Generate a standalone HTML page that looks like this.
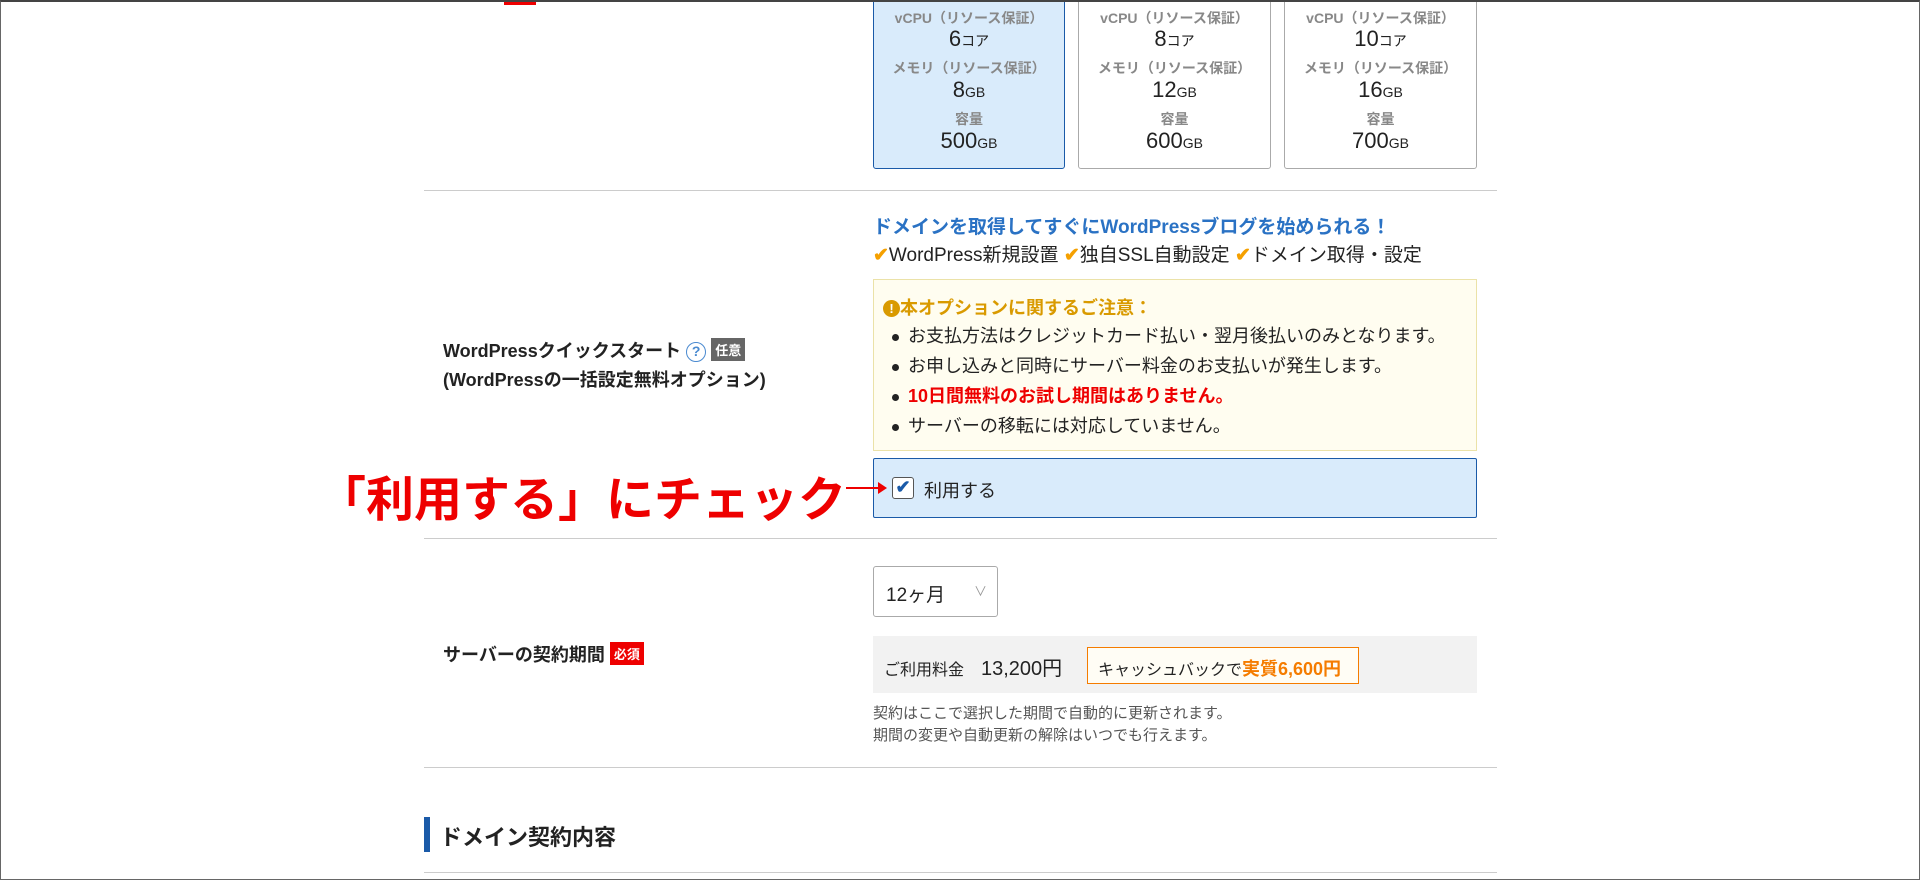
<!DOCTYPE html><html><head><meta charset="utf-8"><style>
*{box-sizing:border-box;margin:0;padding:0}
body{width:1920px;height:880px;overflow:hidden;background:#fff;font-family:"Liberation Sans","Noto Sans CJK JP",sans-serif;color:#222;position:relative}
.a{position:absolute}
.frame{position:absolute;left:0;top:0;width:1920px;height:880px;border:1px solid #666;border-top:2px solid #444}
.card{position:absolute;top:-4px;height:173px;border:1px solid #aaa;border-radius:3px;text-align:center;background:#fff}
.card.sel{background:#d9ebfb;border-color:#1a5aa8}
.card .l{position:absolute;left:0;right:0;font-size:14px;color:#888;font-weight:bold}
.card .v{position:absolute;left:0;right:0;font-size:22px;color:#222}
.card .v small{font-size:14px}
.hr{position:absolute;left:424px;width:1073px;height:1px;background:#ccc}
.bul{position:absolute;left:892px;font-size:18px}
.bul:before{content:"";display:inline-block;width:7px;height:7px;border-radius:50%;background:#222;vertical-align:middle;margin-right:9px}
</style></head><body>
<div class="a" style="left:504px;top:0;width:32px;height:5px;background:#e00"></div>
<div class="card sel" style="left:873px;width:192px">
<div class="l" style="top:11px">vCPU（リソース保証）</div><div class="v" style="top:29px">6<small>コア</small></div>
<div class="l" style="top:61px">メモリ（リソース保証）</div><div class="v" style="top:80px">8<small>GB</small></div>
<div class="l" style="top:112px">容量</div><div class="v" style="top:131px">500<small>GB</small></div></div>
<div class="card" style="left:1078px;width:193px">
<div class="l" style="top:11px">vCPU（リソース保証）</div><div class="v" style="top:29px">8<small>コア</small></div>
<div class="l" style="top:61px">メモリ（リソース保証）</div><div class="v" style="top:80px">12<small>GB</small></div>
<div class="l" style="top:112px">容量</div><div class="v" style="top:131px">600<small>GB</small></div></div>
<div class="card" style="left:1284px;width:193px">
<div class="l" style="top:11px">vCPU（リソース保証）</div><div class="v" style="top:29px">10<small>コア</small></div>
<div class="l" style="top:61px">メモリ（リソース保証）</div><div class="v" style="top:80px">16<small>GB</small></div>
<div class="l" style="top:112px">容量</div><div class="v" style="top:131px">700<small>GB</small></div></div>
<div class="hr" style="top:190px"></div>
<div class="a" style="left:873px;top:212px;font-size:19px;font-weight:bold;color:#2a72c4">ドメインを取得してすぐにWordPressブログを始められる！</div>
<div class="a" style="left:873px;top:240px;font-size:19px"><span style="color:#f5a000;font-weight:bold">✔</span>WordPress新規設置 <span style="color:#f5a000;font-weight:bold">✔</span>独自SSL自動設定 <span style="color:#f5a000;font-weight:bold">✔</span>ドメイン取得・設定</div>
<div class="a" style="left:873px;top:279px;width:604px;height:172px;background:#fffdf0;border:1px solid #ebe2a8"></div>
<div class="a" style="left:883px;top:294px;font-size:18px;font-weight:bold;color:#d99a00"><span style="display:inline-block;width:17px;height:17px;border-radius:50%;background:#d99a00;color:#fff;font-size:13px;text-align:center;line-height:17px;vertical-align:1px">!</span>本オプションに関するご注意：</div>
<div class="bul" style="top:322px">お支払方法はクレジットカード払い・翌月後払いのみとなります。</div>
<div class="bul" style="top:352px">お申し込みと同時にサーバー料金のお支払いが発生します。</div>
<div class="bul" style="top:382px;color:#e00;font-weight:bold">10日間無料のお試し期間はありません。</div>
<div class="bul" style="top:412px">サーバーの移転には対応していません。</div>
<div class="a" style="left:443px;top:337px;font-size:18px;font-weight:bold">WordPressクイックスタート <span style="display:inline-block;width:20px;height:20px;border:1.5px solid #4a8ad0;border-radius:50%;color:#4a8ad0;font-size:14px;text-align:center;line-height:17px;vertical-align:1px">?</span> <span style="display:inline-block;background:#666;color:#fff;font-size:13px;padding:2px 4px;vertical-align:2px">任意</span></div>
<div class="a" style="left:443px;top:366px;font-size:18px;font-weight:bold">(WordPressの一括設定無料オプション)</div>
<div class="a" style="left:873px;top:458px;width:604px;height:60px;background:#d9ebfb;border:1px solid #1a5aa8;border-radius:2px"></div>
<div class="a" style="left:892px;top:477px;width:22px;height:22px;border:1.5px solid #555;border-radius:3px;background:#fff;color:#1a5aa8;font-size:18px;text-align:center;line-height:19px;font-weight:bold">✔</div>
<div class="a" style="left:924px;top:477px;font-size:18px">利用する</div>
<div class="a" style="left:318px;top:460px;font-size:48px;font-weight:bold;color:#e00;white-space:nowrap">「利用する」にチェック</div>
<div class="a" style="left:846px;top:487px;width:34px;height:2px;background:#e00"></div>
<div class="a" style="left:878px;top:482px;width:0;height:0;border-left:9px solid #e00;border-top:6px solid transparent;border-bottom:6px solid transparent"></div>
<div class="hr" style="top:538px"></div>
<div class="a" style="left:873px;top:566px;width:125px;height:51px;border:1px solid #aaa;border-radius:3px;font-size:19px;padding:13px 0 0 12px">12ヶ月<span style="position:absolute;right:10px;top:14px;font-size:13px;color:#999">∨</span></div>
<div class="a" style="left:443px;top:641px;font-size:18px;font-weight:bold">サーバーの契約期間 <span style="display:inline-block;background:#e00;color:#fff;font-size:13px;padding:2px 4px;vertical-align:2px">必須</span></div>
<div class="a" style="left:873px;top:636px;width:604px;height:57px;background:#f2f2f2"></div>
<div class="a" style="left:884px;top:656px;font-size:16px">ご利用料金</div>
<div class="a" style="left:981px;top:652px;font-size:20px">13,200円</div>
<div class="a" style="left:1087px;top:647px;width:272px;height:37px;border:1.5px solid #f57c00;background:#fffdf5;font-size:16px;padding:7px 0 0 10px">キャッシュバックで<b style="color:#f57c00;font-size:18px">実質6,600円</b></div>
<div class="a" style="left:873px;top:703px;font-size:15px;color:#555;line-height:22px">契約はここで選択した期間で自動的に更新されます。<br>期間の変更や自動更新の解除はいつでも行えます。</div>
<div class="hr" style="top:767px"></div>
<div class="a" style="left:424px;top:817px;width:6px;height:35px;background:#1a5aa8"></div>
<div class="a" style="left:440px;top:820px;font-size:22px;font-weight:bold">ドメイン契約内容</div>
<div class="hr" style="top:872px"></div>
<div class="frame"></div>
</body></html>
